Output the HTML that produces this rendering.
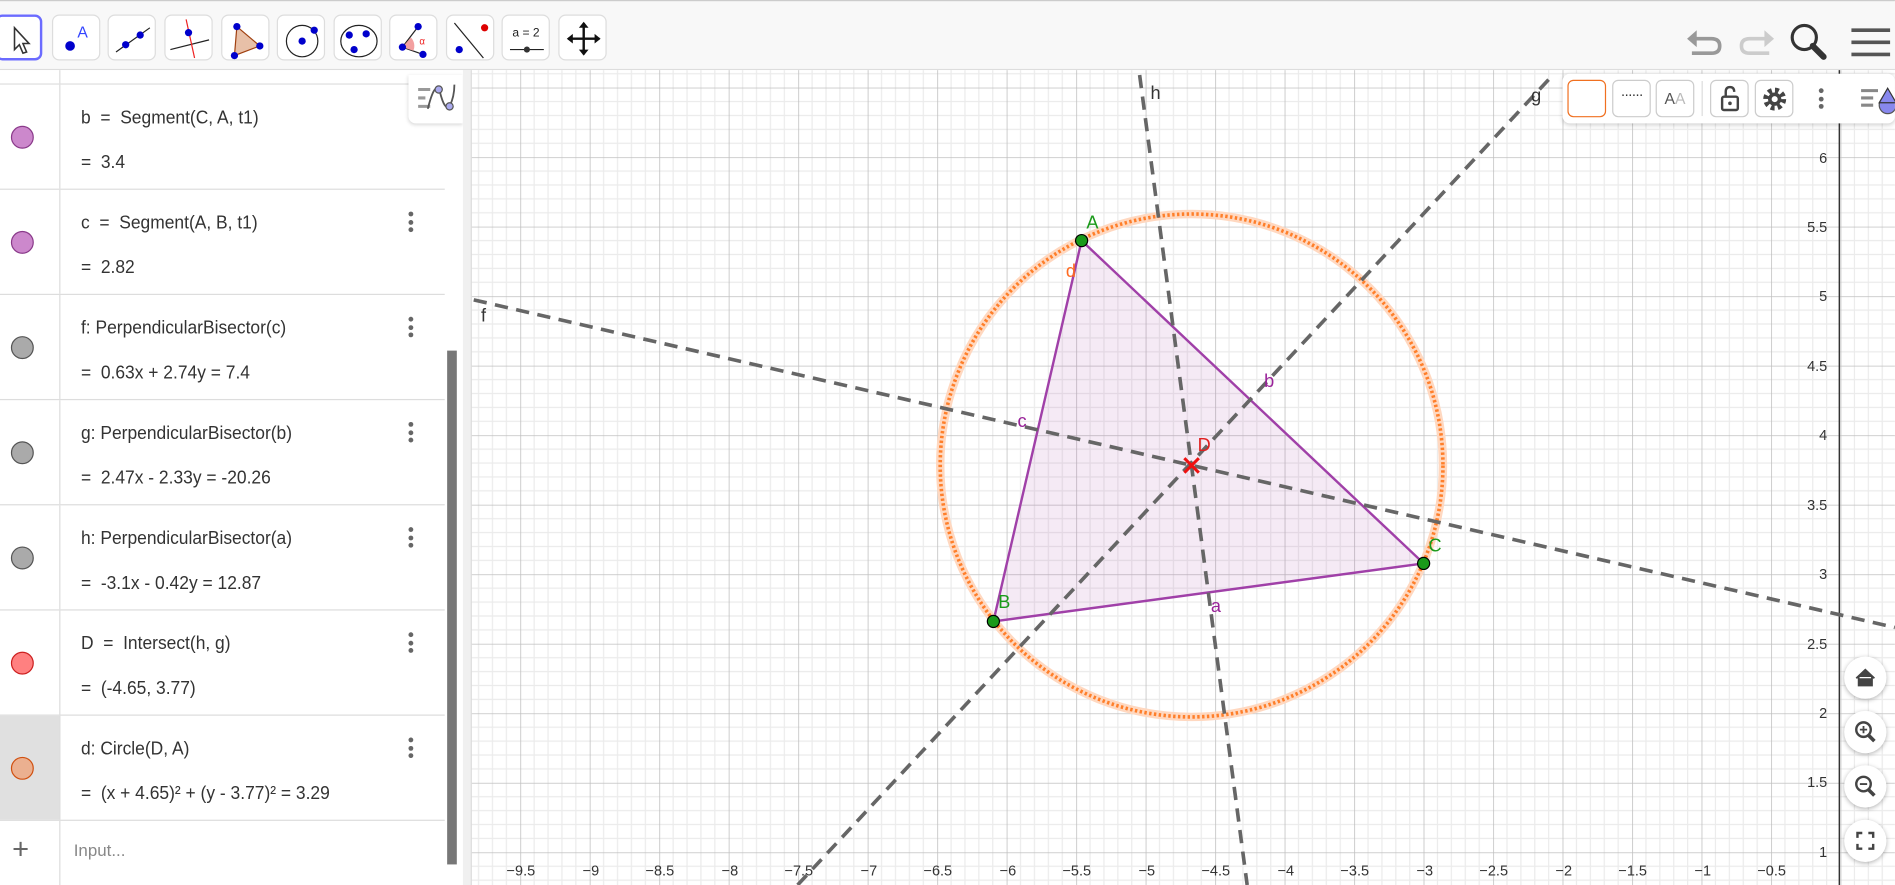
<!DOCTYPE html>
<html><head><meta charset="utf-8"><style>
html,body{margin:0;padding:0;width:1895px;height:885px;overflow:hidden;background:#fff}
#w{position:absolute;left:0;top:0;width:1568px;height:732px;transform:scale(1.2085,1.209);transform-origin:0 0;font-family:"Liberation Sans",sans-serif;color:#333}
#top{position:absolute;left:0;top:0;width:1568px;height:58px;background:#f8f8f8;border-top:1px solid #ccc;border-bottom:1px solid #ddd;box-sizing:border-box}
.tb{position:absolute;top:11px;width:40px;height:38px;border:1px solid #ddd;border-radius:6px;background:#fff;box-sizing:border-box}
.tb svg{position:absolute;left:0;top:0}
#alg{position:absolute;left:0;top:58px;width:383px;height:674px;background:#fff;overflow:hidden}
.row{position:absolute;left:0;width:368px;height:87px;border-bottom:1px solid #ddd;box-sizing:border-box}
.cc{position:absolute;left:0;top:0;width:50px;height:100%;border-right:1px solid #ddd;box-sizing:border-box}
.dot{position:absolute;left:9px;top:34px;width:19px;height:19px;border-radius:50%;box-sizing:border-box;border:1px solid}
.l1{position:absolute;left:67px;top:19px;font-size:15.5px;white-space:nowrap;transform:scaleX(0.93);transform-origin:0 0}
.l2{position:absolute;left:67px;top:56px;font-size:15.5px;white-space:nowrap;transform:scaleX(0.93);transform-origin:0 0}
.menu{position:absolute;left:338px;top:18px;width:4px}
.menu i{display:block;width:4px;height:4px;border-radius:50%;background:#666;margin-bottom:2.5px}
.rb{position:absolute;left:1526px;width:35px;height:35px;border-radius:50%;background:#fff;box-shadow:0 1px 4px rgba(0,0,0,.3)}
</style></head><body><div id="w">
<div id="top">
<div class="tb" style="left:-4px;width:39px;border:2px solid #6b6bff"><svg width="40" height="38"><path d="M14 9 L14 27 L18 23 L21 30 L24 29 L21 22 L26 22 Z" fill="#fff" stroke="#333" stroke-width="1.3"/></svg></div>
<div class="tb" style="left:43px"><svg width="40" height="38"><circle cx="14" cy="25" r="4" fill="#0000cc"/><text x="20" y="18" font-size="13" fill="#3344ff" font-family="Liberation Sans">A</text></svg></div>
<div class="tb" style="left:89px"><svg width="40" height="38"><line x1="6" y1="30" x2="34" y2="10" stroke="#222"/><circle cx="14" cy="24" r="3" fill="#0000cc"/><circle cx="26" cy="16" r="3" fill="#0000cc"/></svg></div>
<div class="tb" style="left:136px"><svg width="40" height="38"><line x1="4" y1="28" x2="36" y2="20" stroke="#222"/><line x1="17" y1="3" x2="24" y2="35" stroke="#e22"/><circle cx="19" cy="14" r="3" fill="#0000cc"/></svg></div>
<div class="tb" style="left:183px"><svg width="40" height="38"><path d="M12 9 L31 25 L10 33 Z" fill="#e8c0a8" stroke="#a04010"/><circle cx="12" cy="9" r="3" fill="#0000cc"/><circle cx="31" cy="25" r="3" fill="#0000cc"/><circle cx="10" cy="33" r="3" fill="#0000cc"/></svg></div>
<div class="tb" style="left:229px"><svg width="40" height="38"><circle cx="20" cy="21" r="13" fill="none" stroke="#222"/><circle cx="20" cy="21" r="3" fill="#0000cc"/><circle cx="30" cy="12" r="3" fill="#0000cc"/></svg></div>
<div class="tb" style="left:276px"><svg width="40" height="38"><ellipse cx="20" cy="21" rx="15" ry="13" fill="none" stroke="#222"/><circle cx="12" cy="16" r="3" fill="#0000cc"/><circle cx="26" cy="15" r="3" fill="#0000cc"/><circle cx="16" cy="28" r="3" fill="#0000cc"/></svg></div>
<div class="tb" style="left:322px"><svg width="40" height="38"><path d="M10 26 L23 9 M10 26 L27 32" stroke="#222" fill="none"/><path d="M10 26 L17 18 A10 10 0 0 1 19 29 Z" fill="#f3a0a0"/><text x="24" y="24" font-size="8" fill="#e22">α</text><circle cx="10" cy="26" r="3" fill="#0000cc"/><circle cx="23" cy="9" r="3" fill="#0000cc"/><circle cx="27" cy="32" r="3" fill="#0000cc"/></svg></div>
<div class="tb" style="left:369px"><svg width="40" height="38"><line x1="6" y1="6" x2="30" y2="35" stroke="#222"/><circle cx="31" cy="10" r="3" fill="#d00"/><circle cx="10" cy="28" r="3" fill="#0000cc"/></svg></div>
<div class="tb" style="left:415px"><svg width="40" height="38"><text x="8" y="17" font-size="10" fill="#222">a = 2</text><line x1="6" y1="28" x2="34" y2="28" stroke="#222"/><circle cx="20" cy="28" r="2.5" fill="#333"/></svg></div>
<div class="tb" style="left:462px"><svg width="40" height="38"><path d="M20 6 L20 32 M7 19 L33 19" stroke="#111" stroke-width="2"/><path d="M20 5 L16 10 L24 10Z M20 33 L16 28 L24 28Z M6 19 L11 15 L11 23Z M34 19 L29 15 L29 23Z" fill="#111"/></svg></div>
<svg style="position:absolute;left:1390px;top:14px" width="175" height="40"><path d="M12 17 H26 Q33 17 33 23 Q33 29 26 29 H10" fill="none" stroke="#999" stroke-width="3"/><path d="M6 17 L14 10 L14 24Z" fill="#999"/><path d="M72 17 H58 Q51 17 51 23 Q51 29 58 29 H74" fill="none" stroke="#ccc" stroke-width="3"/><path d="M78 17 L70 10 L70 24Z" fill="#ccc"/><circle cx="103" cy="16" r="10" fill="none" stroke="#333" stroke-width="2.6"/><path d="M110 23 L119 32" stroke="#333" stroke-width="5" stroke-linecap="round"/><path d="M142 10 H174 M142 20 H174 M142 30 H174" stroke="#555" stroke-width="3"/></svg>
</div>

<svg style="position:absolute;left:0;top:0" width="1568" height="732">
<defs>
<pattern id="gp" patternUnits="userSpaceOnUse" x="1523" y="820" width="57.5" height="57.5">
<path d="M11.5 0V57.5M23 0V57.5M34.5 0V57.5M46 0V57.5M0 11.5H57.5M0 23H57.5M0 34.5H57.5M0 46H57.5" stroke="#ebebeb" stroke-width="1" fill="none"/>
<path d="M0 0V57.5M0 0H57.5" stroke="#c0c0c0" stroke-width="1.3" fill="none"/>
</pattern>
</defs>
<rect x="390" y="58" width="1178" height="674" fill="#fff"/>
<rect x="390" y="58" width="1178" height="674" fill="url(#gp)"/>
<line x1="1522" y1="58" x2="1522" y2="732" stroke="#333" stroke-width="1.2"/>
<g font-size="12" fill="#333" font-family="Liberation Sans" text-anchor="end">
<text x="1512" y="135">6</text><text x="1512" y="192">5.5</text><text x="1512" y="249">5</text><text x="1512" y="307">4.5</text><text x="1512" y="364">4</text><text x="1512" y="422">3.5</text><text x="1512" y="479">3</text><text x="1512" y="537">2.5</text><text x="1512" y="594">2</text><text x="1512" y="651">1.5</text><text x="1512" y="709">1</text>
</g>
<g font-size="12" fill="#333" font-family="Liberation Sans" text-anchor="middle">
<text x="431" y="724">−9.5</text><text x="489" y="724">−9</text><text x="546" y="724">−8.5</text><text x="604" y="724">−8</text><text x="661" y="724">−7.5</text><text x="719" y="724">−7</text><text x="776" y="724">−6.5</text><text x="834" y="724">−6</text><text x="891" y="724">−5.5</text><text x="949" y="724">−5</text><text x="1006" y="724">−4.5</text><text x="1064" y="724">−4</text><text x="1121" y="724">−3.5</text><text x="1179" y="724">−3</text><text x="1236" y="724">−2.5</text><text x="1294" y="724">−2</text><text x="1351" y="724">−1.5</text><text x="1409" y="724">−1</text><text x="1466" y="724">−0.5</text>
</g>
<path d="M895 199 L822 514 L1178 466 Z" fill="rgba(153,51,153,0.1)" stroke="#a040a8" stroke-width="2"/>
<circle cx="986" cy="385" r="208" fill="none" stroke="#ffd8c0" stroke-width="7"/>
<circle cx="986" cy="385" r="208" fill="none" stroke="#ff7f2a" stroke-width="3" stroke-dasharray="2 2"/>
<g stroke="#666" stroke-width="3" stroke-dasharray="11 7" fill="none">
<line x1="943" y1="62" x2="1032" y2="732"/>
<line x1="660" y1="732" x2="1285" y2="62"/>
<line x1="392" y1="248" x2="1568" y2="519"/>
</g>
<g font-size="15" font-family="Liberation Sans">
<text x="952" y="82" fill="#333">h</text><text x="1267" y="84" fill="#333">g</text><text x="398" y="266" fill="#333">f</text>
<text x="899" y="189" fill="#1a9a1a">A</text><text x="826" y="503" fill="#1a9a1a">B</text><text x="1182" y="456" fill="#1a9a1a">C</text>
<text x="991" y="373" fill="#e02020">D</text>
<text x="1002" y="506" fill="#992299">a</text><text x="1046" y="320" fill="#992299">b</text><text x="842" y="353" fill="#992299">c</text><text x="882" y="229" fill="#ff6a20">d</text>
</g>
<circle cx="895" cy="199" r="5" fill="#1a9a1a" stroke="#000" stroke-width="1"/>
<circle cx="822" cy="514" r="5" fill="#1a9a1a" stroke="#000" stroke-width="1"/>
<circle cx="1178" cy="466" r="5" fill="#1a9a1a" stroke="#000" stroke-width="1"/>
<path d="M980 379 L992 391 M992 379 L980 391" stroke="#ee1111" stroke-width="2.5"/>
<rect x="383" y="58" width="7" height="674" fill="#f0f0f0"/>
<line x1="390" y1="58" x2="390" y2="732" stroke="#ddd"/>
</svg>

<div style="position:absolute;left:1293px;top:61px;width:275px;height:41px;background:#fff;border-radius:6px;box-shadow:0 1px 4px rgba(0,0,0,.2)">
<div style="position:absolute;left:4px;top:5px;width:32px;height:31px;border:1px solid #f07020;border-radius:5px;box-sizing:border-box"></div>
<div style="position:absolute;left:41px;top:5px;width:32px;height:31px;border:1px solid #ccc;border-radius:5px;box-sizing:border-box;text-align:center;line-height:22px;font-size:12px;letter-spacing:-1px">······</div>
<div style="position:absolute;left:77px;top:5px;width:32px;height:31px;border:1px solid #ccc;border-radius:5px;box-sizing:border-box;text-align:center;line-height:29px;font-size:13px;color:#555">A<span style="color:#bbb">A</span></div>
<div style="position:absolute;left:115px;top:6px;width:1px;height:29px;background:#ddd"></div>
<div style="position:absolute;left:122px;top:5px;width:32px;height:31px;border:1px solid #ccc;border-radius:5px;box-sizing:border-box"><svg width="32" height="31"><rect x="9" y="13" width="13" height="11" rx="1.5" fill="none" stroke="#444" stroke-width="2"/><path d="M12 13 V9 Q12 5 15.5 5 Q19 5 19 9" fill="none" stroke="#444" stroke-width="2"/><circle cx="15.5" cy="18.5" r="1.5" fill="#444"/></svg></div>
<div style="position:absolute;left:159px;top:5px;width:32px;height:31px;border:1px solid #ccc;border-radius:5px;box-sizing:border-box"><svg width="32" height="31"><circle cx="15.5" cy="15" r="7" fill="none" stroke="#444" stroke-width="5" stroke-dasharray="3 2.5"/><circle cx="15.5" cy="15" r="5.5" fill="#444"/><circle cx="15.5" cy="15" r="2.5" fill="#fff"/></svg></div>
<div style="position:absolute;left:212px;top:12px;width:4px"><i style="display:block;width:4px;height:4px;border-radius:50%;background:#666;margin-bottom:2.5px"></i><i style="display:block;width:4px;height:4px;border-radius:50%;background:#666;margin-bottom:2.5px"></i><i style="display:block;width:4px;height:4px;border-radius:50%;background:#666"></i></div>
<svg style="position:absolute;left:245px;top:6px" width="30" height="30"><path d="M2 8H16M2 14H12M2 20H12" stroke="#888" stroke-width="2.5"/><circle cx="24" cy="20" r="7" fill="#8888ee" stroke="#555"/><path d="M24 6 L31 18 L17 18Z" fill="#8888ee" stroke="#333"/></svg>
</div>

<div id="alg">
<div class="row" style="top:-75px;height:87px"><div class="cc"></div></div>
<div class="row" style="top:12px"><div class="cc"><div class="dot" style="background:#cc88cc;border-color:#8a3a8a"></div></div><div class="l1">b &nbsp;=&nbsp; Segment(C, A, t1)</div><div class="l2">= &nbsp;3.4</div></div>
<div class="row" style="top:99px"><div class="cc"><div class="dot" style="background:#cc88cc;border-color:#8a3a8a"></div></div><div class="l1">c &nbsp;=&nbsp; Segment(A, B, t1)</div><div class="l2">= &nbsp;2.82</div><div class="menu"><i></i><i></i><i></i></div></div>
<div class="row" style="top:186px"><div class="cc"><div class="dot" style="background:#aaa;border-color:#555"></div></div><div class="l1">f: PerpendicularBisector(c)</div><div class="l2">= &nbsp;0.63x + 2.74y = 7.4</div><div class="menu"><i></i><i></i><i></i></div></div>
<div class="row" style="top:273px"><div class="cc"><div class="dot" style="background:#aaa;border-color:#555"></div></div><div class="l1">g: PerpendicularBisector(b)</div><div class="l2">= &nbsp;2.47x - 2.33y = -20.26</div><div class="menu"><i></i><i></i><i></i></div></div>
<div class="row" style="top:360px"><div class="cc"><div class="dot" style="background:#aaa;border-color:#555"></div></div><div class="l1">h: PerpendicularBisector(a)</div><div class="l2">= &nbsp;-3.1x - 0.42y = 12.87</div><div class="menu"><i></i><i></i><i></i></div></div>
<div class="row" style="top:447px"><div class="cc"><div class="dot" style="background:#ff8080;border-color:#cc2020"></div></div><div class="l1">D &nbsp;=&nbsp; Intersect(h, g)</div><div class="l2">= &nbsp;(-4.65, 3.77)</div><div class="menu"><i></i><i></i><i></i></div></div>
<div class="row" style="top:534px"><div class="cc" style="background:#e0e0e0"><div class="dot" style="background:#ebb090;border-color:#d05010"></div></div><div class="l1">d: Circle(D, A)</div><div class="l2">= &nbsp;(x + 4.65)² + (y - 3.77)² = 3.29</div><div class="menu"><i></i><i></i><i></i></div></div>
<div class="row" style="top:621px;height:53px;border:none"><div class="cc"><div style="position:absolute;left:10px;top:10px;font-size:24px;color:#666">+</div></div><div style="position:absolute;left:61px;top:16px;font-size:14px;color:#888">Input...</div></div>
<div style="position:absolute;left:370px;top:232px;width:8px;height:425px;background:#777"></div>
<div style="position:absolute;left:338px;top:4px;width:45px;height:40px;background:#fff;border-radius:0 0 0 6px;box-shadow:0 1px 3px rgba(0,0,0,.15)"><svg width="45" height="40"><path d="M8 12H18M8 19H14M8 26H18" stroke="#999" stroke-width="2.5"/><path d="M16 28 Q22 4 26 14 Q30 30 34 26 Q38 18 38 8" fill="none" stroke="#555" stroke-width="1.5"/><circle cx="25" cy="12" r="3" fill="#aaaaee" stroke="#555"/><circle cx="34" cy="26" r="3" fill="#aaaaee" stroke="#555"/></svg></div>
</div>

<div class="rb" style="top:543px"><svg width="35" height="35"><path d="M10 18 L17.5 11 L25 18 M12 17 V24 H23 V17" fill="#444" stroke="#444" stroke-width="1.5"/></svg></div>
<div class="rb" style="top:588px"><svg width="35" height="35"><circle cx="16" cy="15.5" r="6" fill="none" stroke="#444" stroke-width="2"/><path d="M20 20 L25 25" stroke="#444" stroke-width="3"/><path d="M13 15.5H19M16 12.5V18.5" stroke="#444" stroke-width="1.5"/></svg></div>
<div class="rb" style="top:633px"><svg width="35" height="35"><circle cx="16" cy="15.5" r="6" fill="none" stroke="#444" stroke-width="2"/><path d="M20 20 L25 25" stroke="#444" stroke-width="3"/><path d="M13 15.5H19" stroke="#444" stroke-width="1.5"/></svg></div>
<div class="rb" style="top:678px"><svg width="35" height="35"><path d="M11 15V11H15M20 11H24V15M24 20V24H20M15 24H11V20" fill="none" stroke="#444" stroke-width="2"/></svg></div>
</div></body></html>
